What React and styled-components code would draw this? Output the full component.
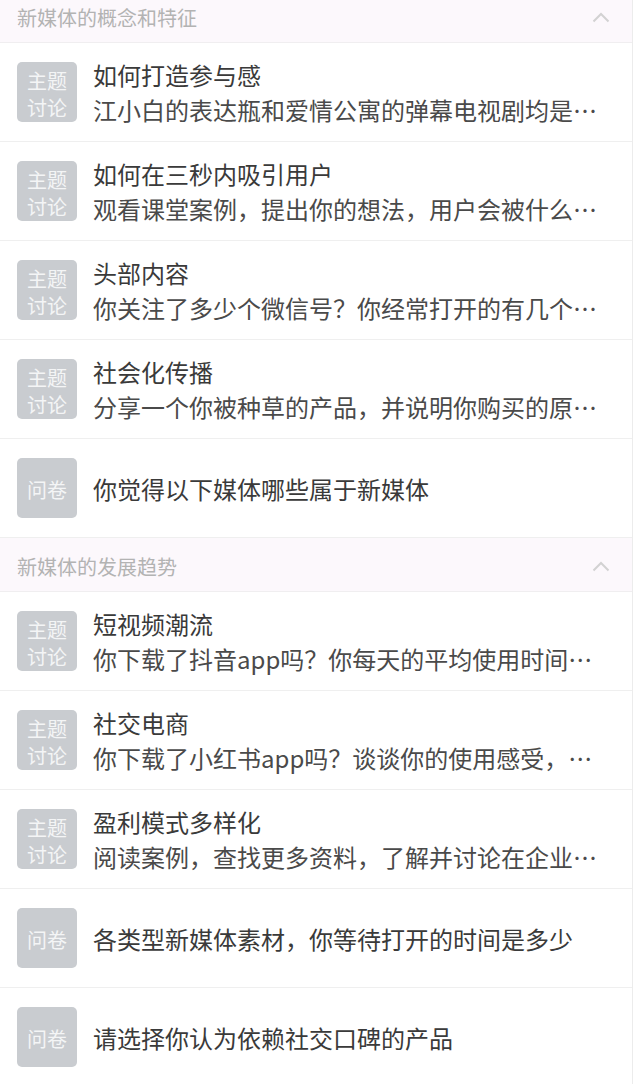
import React from 'react';
import styled, { createGlobalStyle } from 'styled-components';

const GlobalStyle = createGlobalStyle`
  html, body {
    margin: 0;
    padding: 0;
    background: #fff;
  }
  body {
    font-family: "Noto Sans CJK SC", "Noto Sans", sans-serif;
    overflow: hidden;
  }
`;

const Page = styled.div`
  width: 632px;
  margin-top: -11px;
  border-right: 1px solid #ececec;
  background: #fff;
`;

const SectionHead = styled.div`
  display: flex;
  align-items: center;
  justify-content: space-between;
  height: 54px;
  padding: 3px 22px 0 17px;
  box-sizing: border-box;
  background: #fcf8fc;
  border-bottom: 1px solid #f0eef0;
  font-size: 20px;
  color: #b3b3b3;
`;

const Row = styled.div`
  display: flex;
  align-items: center;
  height: 98px;
  padding: 0 25px 0 17px;
  border-bottom: 1px solid #efefef;
`;

const Badge = styled.div`
  flex: 0 0 60px;
  height: 60px;
  border-radius: 5px;
  background: #c9ccd0;
  color: #f4f5f6;
  font-size: 20px;
  line-height: 27px;
  display: flex;
  flex-direction: column;
  align-items: center;
  justify-content: center;
  padding-top: 3px;
  box-sizing: border-box;
`;

const Body = styled.div`
  flex: 1;
  min-width: 0;
  margin-left: 16px;
  display: flex;
  flex-direction: column;
`;

const Title = styled.div`
  font-size: 24px;
  line-height: 35px;
  color: #3a3a3a;
  white-space: nowrap;
  overflow: hidden;
  text-overflow: ellipsis;
`;

const Desc = styled(Title)`
  color: #4a4a4a;
`;

const Chevron = () => (
  <svg width="18" height="11" viewBox="0 0 18 11">
    <path d="M1.5 9.5 L9 2 L16.5 9.5" fill="none" stroke="#d2d2d2" strokeWidth="2" />
  </svg>
);

const sections = [
  {
    name: '新媒体的概念和特征',
    items: [
      { type: 'topic', title: '如何打造参与感', desc: '江小白的表达瓶和爱情公寓的弹幕电视剧均是以用户参与为核心的营销方式' },
      { type: 'topic', title: '如何在三秒内吸引用户', desc: '观看课堂案例，提出你的想法，用户会被什么样的内容吸引' },
      { type: 'topic', title: '头部内容', desc: '你关注了多少个微信号？你经常打开的有几个？为什么' },
      { type: 'topic', title: '社会化传播', desc: '分享一个你被种草的产品，并说明你购买的原因和感受' },
      { type: 'quiz', title: '你觉得以下媒体哪些属于新媒体' },
    ],
  },
  {
    name: '新媒体的发展趋势',
    items: [
      { type: 'topic', title: '短视频潮流', desc: '你下载了抖音app吗？你每天的平均使用时间是多少' },
      { type: 'topic', title: '社交电商', desc: '你下载了小红书app吗？谈谈你的使用感受，以及你的看法' },
      { type: 'topic', title: '盈利模式多样化', desc: '阅读案例，查找更多资料，了解并讨论在企业中的应用' },
      { type: 'quiz', title: '各类型新媒体素材，你等待打开的时间是多少' },
      { type: 'quiz', title: '请选择你认为依赖社交口碑的产品' },
    ],
  },
];

export default function App() {
  return (
    <Page>
      <GlobalStyle />
      {sections.map((sec) => (
        <React.Fragment key={sec.name}>
          <SectionHead>
            <span>{sec.name}</span>
            <Chevron />
          </SectionHead>
          {sec.items.map((it) => (
            <Row key={it.title}>
              {it.type === 'topic' ? (
                <Badge>
                  <span>主题</span>
                  <span>讨论</span>
                </Badge>
              ) : (
                <Badge>问卷</Badge>
              )}
              <Body>
                <Title>{it.title}</Title>
                {it.desc && <Desc>{it.desc}</Desc>}
              </Body>
            </Row>
          ))}
        </React.Fragment>
      ))}
    </Page>
  );
}
